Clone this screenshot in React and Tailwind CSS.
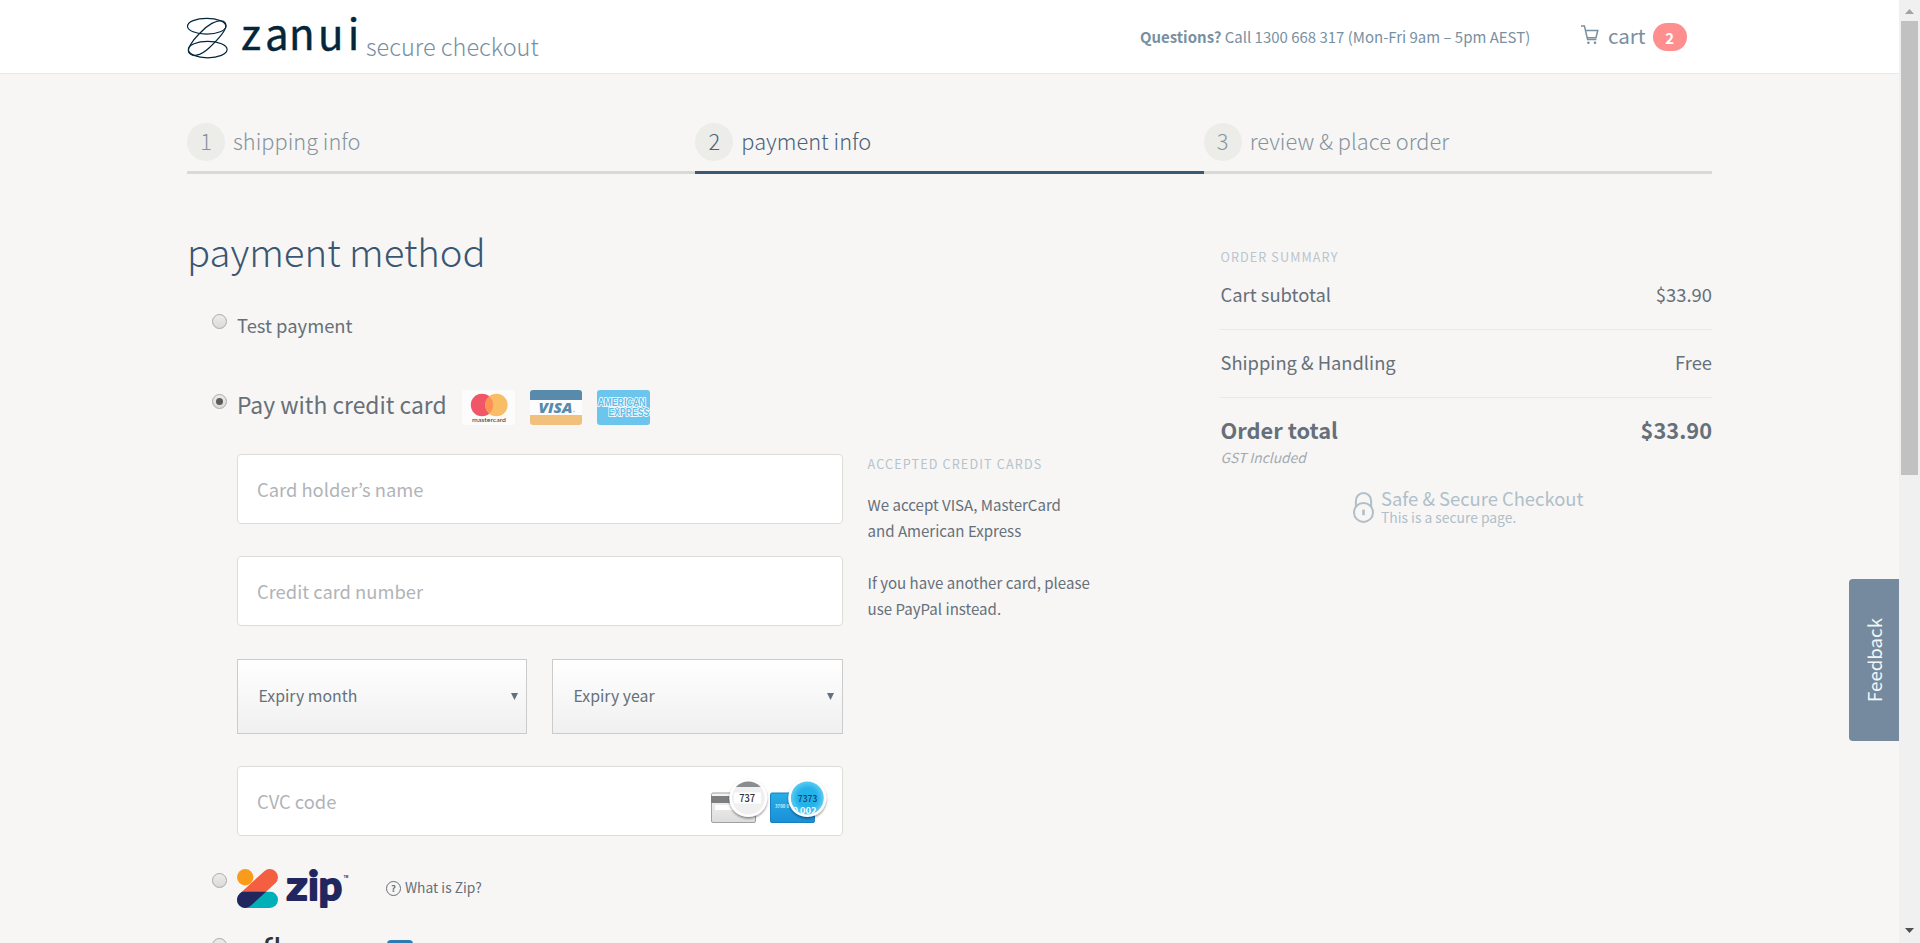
import React from 'react';

function BrandMark() {
  return (
    <svg className="mt-[17px] h-[42px] w-[172px] shrink-0 overflow-visible" viewBox="0 0 172 42">
      <g fill="none" stroke="#04263b" strokeWidth="1.2">
        <ellipse cx="19.7" cy="9.2" rx="19.2" ry="7.9" />
        <ellipse cx="20.7" cy="32.6" rx="19.4" ry="8.2" />
        <path d="M36.5 4.2C30 2 20 8 12 17C5 24 0 32 1.8 35.5C4.5 40 13 39.5 22 31C31 22.5 39 14 39 8.5C39 6.5 38 5 36.5 4.2z" />
      </g>
      <text
        x="54 78 102 131 160.8"
        y="33.4"
        fill="#04263b"
        stroke="#04263b"
        strokeWidth="0.4"
        className="font-['Noto_Sans_CJK_KR',sans-serif] text-[42px] font-normal"
      >
        zanui
      </text>
    </svg>
  );
}

function CartIcon() {
  return (
    <svg className="mt-[25px] ml-[51px] h-5 w-[18px] shrink-0" viewBox="0 0 18 20" fill="none" stroke="#7790a2" strokeWidth="1.5">
      <path d="M0 0.9h3.4l3.2 13.6h8.8" />
      <path d="M4.4 5.4h12.4l-1.8 7.4h-8.6" />
      <circle cx="7.4" cy="17.8" r="1.3" fill="#7790a2" stroke="none" />
      <circle cx="14" cy="17.8" r="1.3" fill="#7790a2" stroke="none" />
    </svg>
  );
}

function Header() {
  return (
    <header className="flex h-[74px] items-start border-b border-[#e8e8e8] bg-white pl-[187px] text-[#7790a2]">
      <BrandMark />
      <span className="mt-[31px] ml-[7px] w-[774px] text-[23.5px] leading-[30px] font-light">secure checkout</span>
      <span className="mt-[27px] w-[390px] text-[14.98px] leading-5 whitespace-nowrap">
        <b>Questions?</b> Call 1300 668 317 (Mon-Fri 9am – 5pm AEST)
      </span>
      <CartIcon />
      <span className="mt-[21px] ml-[9px] text-[20.6px] leading-[28px]">cart</span>
      <span className="mt-[23px] ml-[7px] h-7 w-[34px] rounded-full bg-[#ff8e8e] text-center text-[15px] leading-[29px] font-bold text-white">2</span>
    </header>
  );
}

function Step({ number, label, active }) {
  return (
    <li
      className={
        active
          ? 'flex h-[51px] flex-1 border-b-[3px] border-[#3b5876] text-[#4a6178]'
          : 'flex h-[51px] flex-1 border-b-[3px] border-[#d9d9d5] text-[#84949f]'
      }
    >
      <span className="h-[38px] w-[38px] rounded-full bg-[#ecece9] text-center text-[21.8px] leading-[36px] font-light">{number}</span>
      <span className="ml-[8px] text-[21.8px] leading-[36px] font-light">{label}</span>
    </li>
  );
}

function Radio({ checked, className }) {
  return (
    <span className={`flex h-[15px] w-[15px] shrink-0 items-center justify-center rounded-full border border-[#a9a9a9] bg-linear-to-b from-[#ececec] to-[#dadada] ${className}`}>
      {checked && <span className="h-[7px] w-[7px] rounded-full bg-[#5c5c5c]" />}
    </span>
  );
}

function MasterCard() {
  return (
    <svg className="h-[35px] w-[53px]" viewBox="0 0 53 35">
      <rect width="53" height="35" rx="3" fill="#fcfcfc" />
      <circle cx="20" cy="15" r="11.2" fill="#f05568" />
      <circle cx="34.4" cy="15" r="11.2" fill="#f8bd66" />
      <path d="M27.2 6.4a11.2 11.2 0 0 1 0 17.2a11.2 11.2 0 0 1 0-17.2z" fill="#fd9255" />
      <text x="10" y="31.8" textLength="34" lengthAdjust="spacingAndGlyphs" fill="#444" className="font-['Lato',sans-serif] text-[6.4px] font-medium">mastercard</text>
    </svg>
  );
}

function Visa() {
  return (
    <svg className="h-[35px] w-[52px]" viewBox="0 0 52 35">
      <rect width="52" height="35" rx="3" fill="#fcfcfc" />
      <path d="M0 10V3a3 3 0 0 1 3-3h46a3 3 0 0 1 3 3v7z" fill="#578aab" />
      <path d="M0 25v7a3 3 0 0 0 3 3h46a3 3 0 0 0 3-3v-7z" fill="#f1c07c" />
      <text x="8.5" y="22.7" textLength="34" lengthAdjust="spacingAndGlyphs" fill="#578aab" className="font-['Open_Sans',sans-serif] text-[14.8px] font-extrabold italic">VISA</text>
      <circle cx="44" cy="21.5" r="0.8" fill="#a9c3d4" />
    </svg>
  );
}

function Amex() {
  return (
    <svg className="h-[35px] w-[53px] overflow-visible" viewBox="0 0 53 35">
      <rect width="53" height="35" rx="3" fill="#6cc5ec" />
      <g fill="#5cbce8" stroke="#fff" strokeWidth="1.7" paintOrder="stroke" className="font-['Liberation_Sans',sans-serif] text-[10px] font-bold">
        <text x="0.8" y="16" textLength="48" lengthAdjust="spacingAndGlyphs">AMERICAN</text>
        <text x="11.6" y="26.3" textLength="40.6" lengthAdjust="spacingAndGlyphs">EXPRESS</text>
      </g>
    </svg>
  );
}

function CvcCards() {
  return (
    <svg className="mt-[7px] mr-[11px] h-[56px] w-[125px] shrink-0" viewBox="0 0 125 56">
      <defs>
        <linearGradient id="grey" x1="0" y1="0" x2="0" y2="1"><stop offset="0" stopColor="#f6f6f6" /><stop offset="1" stopColor="#dcdcdc" /></linearGradient>
        <linearGradient id="blue" x1="0" y1="0" x2="0" y2="1"><stop offset="0" stopColor="#27aee6" /><stop offset="1" stopColor="#1a8fd8" /></linearGradient>
        <radialGradient id="lens"><stop offset="0.6" stopColor="#24b2ea" /><stop offset="1" stopColor="#5ccbf2" /></radialGradient>
        <clipPath id="lensA"><circle cx="42.3" cy="24" r="16.5" /></clipPath>
        <clipPath id="lensB"><circle cx="101.3" cy="24" r="16.5" /></clipPath>
        <filter id="drop" x="-30%" y="-30%" width="160%" height="160%"><feDropShadow dx="0" dy="1.5" stdDeviation="1.3" floodOpacity="0.45" /></filter>
      </defs>
      <rect x="5.5" y="19" width="44" height="29.5" rx="1.5" fill="url(#grey)" stroke="#a0a0a0" />
      <rect x="5" y="22" width="45" height="7" fill="#7d8083" />
      <rect x="9" y="31" width="20" height="5" fill="#fff" />
      <circle cx="42.3" cy="24" r="19" fill="#fff" filter="url(#drop)" />
      <g clipPath="url(#lensA)">
        <rect x="25" y="6" width="35" height="36" fill="#f0f0f0" />
        <rect x="25" y="5" width="35" height="8" fill="#8a8d8f" />
        <rect x="28" y="18.5" width="27" height="11" fill="#fff" />
      </g>
      <text x="33.2" y="28" textLength="16" lengthAdjust="spacingAndGlyphs" fill="#333" className="font-['Noto_Sans_CJK_KR',sans-serif] text-[10.5px] font-medium">737</text>
      <rect x="64.5" y="19" width="44" height="29.5" rx="1.5" fill="url(#blue)" stroke="#1a7fc0" />
      <text x="69" y="34" fill="#d7effb" textLength="14" className="font-['Noto_Sans_CJK_KR',sans-serif] text-[4.3px] font-bold">3700 0</text>
      <circle cx="101.3" cy="24" r="19" fill="#fff" filter="url(#drop)" />
      <circle cx="101.3" cy="24" r="16.5" fill="url(#lens)" />
      <g clipPath="url(#lensB)">
        <text x="86.5" y="40" textLength="24" lengthAdjust="spacingAndGlyphs" fill="#fff" className="font-['Noto_Sans_CJK_KR',sans-serif] text-[9.5px] font-bold">0 002</text>
      </g>
      <text x="91.8" y="28" textLength="19.5" lengthAdjust="spacingAndGlyphs" fill="#0d4868" className="font-['Noto_Sans_CJK_KR',sans-serif] text-[9.5px] font-medium">7373</text>
    </svg>
  );
}

function ZipLogo() {
  return (
    <svg className="h-10 w-[112px] shrink-0 overflow-visible" viewBox="0 0 112 40">
      <defs>
        <clipPath id="zipTop"><rect x="0" y="0" width="42" height="22.5" /></clipPath>
        <clipPath id="zipBottom"><rect x="0" y="22.5" width="42" height="18" /></clipPath>
      </defs>
      <circle cx="8.2" cy="8.2" r="8.2" fill="#fb9b1c" />
      <g strokeWidth="16.4" strokeLinecap="round">
        <path d="M8.2 30.8H32.8" stroke="#00b0b9" clipPath="url(#zipBottom)" />
        <path d="M8.2 30.8L32.8 8.2" stroke="#f45f42" clipPath="url(#zipTop)" />
        <path d="M8.2 30.8L32.8 8.2" stroke="#22265f" clipPath="url(#zipBottom)" />
      </g>
      <g fill="#22265f" stroke="#22265f" strokeWidth="2.2" strokeLinejoin="round" className="font-['Lato',sans-serif] text-[41px] font-bold">
        <text x="49.6" y="30.8" textLength="21" lengthAdjust="spacingAndGlyphs">z</text>
        <text x="71.2" y="30.8">i</text>
        <text x="81.8" y="30.8">p</text>
      </g>
      <text x="106.8" y="8.5" fill="#22265f" className="font-['Open_Sans',sans-serif] text-[3px] font-bold">TM</text>
    </svg>
  );
}

function Select({ label, className }) {
  return (
    <div className={`flex h-[75px] justify-between border border-[#cbcbcb] bg-linear-to-b from-white to-[#f0f0f0] pr-[8px] pl-[20.5px] text-[15.85px] leading-[72px] text-[#66707a] ${className}`}>
      <span>{label}</span>
      <svg className="mt-[33px] h-[7px] w-[7px]" viewBox="0 0 7 7"><path d="M0 0h7L3.5 7z" fill="#66707a" /></svg>
    </div>
  );
}

const field = 'h-[70px] w-full rounded-[4px] border border-[#dcdcda] bg-white pl-[19px] text-[18.35px] text-[#66707a] placeholder:text-[#b0b4b8] outline-none';

function CardForm() {
  return (
    <div className="mt-[29px] flex pl-[50px]">
      <div className="flex w-[606px] flex-col">
        <input className={field} placeholder="Card holder’s name" />
        <input className={`mt-8 ${field}`} placeholder="Credit card number" />
        <div className="mt-[33px] flex gap-[25px]">
          <Select label="Expiry month" className="w-[290px]" />
          <Select label="Expiry year" className="w-[291px]" />
        </div>
        <div className="mt-8 flex h-[70px] rounded-[4px] border border-[#dcdcda] bg-white">
          <input className="min-w-0 flex-1 pt-[2px] pl-[19px] text-[18.35px] outline-none placeholder:text-[#b0b4b8]" placeholder="CVC code" />
          <CvcCards />
        </div>
      </div>
      <aside className="ml-[24.5px] text-[15.07px] leading-[26px] text-[#66707a]">
        <h3 className="text-[12.6px] leading-[20px] tracking-[1.15px] text-[#b5c3cd]">ACCEPTED CREDIT CARDS</h3>
        <p className="mt-[18px]">We accept VISA, MasterCard<br />and American Express</p>
        <p className="mt-[26px]">If you have another card, please<br />use PayPal instead.</p>
      </aside>
    </div>
  );
}

function PaymentMethods() {
  return (
    <section className="w-[1033px]">
      <h1 className="mt-[53px] text-[38.3px] leading-[48px] font-light text-[#3a5673]">payment method</h1>
      <div className="mt-9 flex h-[75px] items-start pl-[25px] text-[#66707a]">
        <Radio className="mt-[3px]" />
        <span className="ml-[10px] text-[18.4px] leading-[28px]">Test payment</span>
      </div>
      <div className="flex h-[39px] items-start pl-[25px] text-[#66707a]">
        <Radio checked className="mt-[8px]" />
        <span className="mt-px ml-[10px] w-[225px] text-[22.85px] leading-[34px]">Pay with credit card</span>
        <span className="mt-[4px] flex gap-[15px]"><MasterCard /><Visa /><Amex /></span>
      </div>
      <CardForm />
      <div className="mt-[33px] flex h-[68px] items-start pl-[25px] text-[#66707a]">
        <Radio className="mt-[4px]" />
        <span className="ml-[10px]"><ZipLogo /></span>
        <span className="mt-[12px] ml-[37px] h-[15px] w-[15px] rounded-full border border-[#66707a] text-center text-[9.5px] leading-[12.5px] font-bold">?</span>
        <span className="mt-[8px] ml-[4px] text-[13.8px] leading-5">What is Zip?</span>
      </div>
      <div className="flex h-[6px] items-start overflow-hidden pl-[25px]">
        <Radio className="mt-px" />
        <svg className="ml-[35px] h-10 w-[30px] shrink-0" viewBox="0 0 30 40">
          <text x="0 11.5" y="24" fill="#333" className="font-['Lato',sans-serif] text-[32px] font-medium">fl</text>
        </svg>
        <span className="mt-[3px] ml-[95px] h-[26px] w-[26px] shrink-0 rounded-[4px] bg-[#2b7bb5]" />
      </div>
    </section>
  );
}

function OrderSummary() {
  return (
    <aside className="w-[492px] pt-[73px] text-[#66707a]">
      <h2 className="pl-[0.5px] text-[12.6px] leading-5 tracking-[1.1px] text-[#b9c5cf]">ORDER SUMMARY</h2>
      <div className="mt-[13px] flex justify-between border-b border-[#e9e9e7] pb-[21px] text-[18.4px] leading-[28px]">
        <span className="pl-[0.5px]">Cart subtotal</span><span>$33.90</span>
      </div>
      <div className="flex justify-between border-b border-[#e9e9e7] pt-[18px] pb-[21px] text-[18.35px] leading-[28px]">
        <span className="pl-[0.5px]">Shipping &amp; Handling</span><span>Free</span>
      </div>
      <div className="flex justify-between pt-[16px] text-[21.8px] leading-8 font-bold">
        <span className="pl-[0.5px]">Order total</span><span>$33.90</span>
      </div>
      <p className="mt-px pl-[0.5px] text-[13.8px] leading-5 text-[#a3abb1] italic">GST Included</p>
      <div className="mt-5 flex pl-[133px] text-[#afbfca]">
        <svg className="mt-[5px] h-[31px] w-[21px]" viewBox="0 0 21 31" fill="none" stroke="#afbfca" strokeWidth="2">
          <path d="M2.9 15V8.6a7.6 7.6 0 0 1 15.2 0V15" />
          <circle cx="10.5" cy="20.4" r="9.5" />
          <path d="M10.5 17.6v5.6" strokeWidth="2.6" />
        </svg>
        <div className="ml-[7px]">
          <p className="text-[18.4px] leading-[22px]">Safe &amp; Secure Checkout</p>
          <p className="-mt-px pt-[0.5px] text-[13.85px] leading-4">This is a secure page.</p>
        </div>
      </div>
    </aside>
  );
}

export default function App() {
  return (
    <div className="relative flex h-[943px] w-[1920px] overflow-hidden bg-[#f7f6f4] font-['Noto_Sans_CJK_KR',sans-serif]">
      <div className="h-full w-[1899px]">
        <Header />
        <main className="ml-[187px] w-[1525px] pt-[49px]">
          <ol className="flex">
            <Step number="1" label="shipping info" />
            <Step number="2" label="payment info" active />
            <Step number="3" label="review & place order" />
          </ol>
          <div className="flex items-start">
            <PaymentMethods />
            <OrderSummary />
          </div>
        </main>
      </div>
      <div className="absolute top-[579px] right-[21px] flex h-[162px] w-[50px] items-center justify-center rounded-l-[4px] bg-[#758a9e]">
        <span className="-rotate-90 text-[18.7px] leading-[26px] text-[#f3f5f7]">Feedback</span>
      </div>
      <div className="flex w-[21px] flex-col items-center bg-[#f0f0f0]">
        <svg className="mt-[9px] h-[5px] w-[9px]" viewBox="0 0 9 5"><path d="M0 5h9L4.5 0z" fill="#a3a3a3" /></svg>
        <div className="mt-[7px] h-[454px] w-[17px] bg-[#c1c1c1]" />
        <svg className="mt-auto mb-[10px] h-[5px] w-[9px]" viewBox="0 0 9 5"><path d="M0 0h9L4.5 5z" fill="#505050" /></svg>
      </div>
    </div>
  );
}
